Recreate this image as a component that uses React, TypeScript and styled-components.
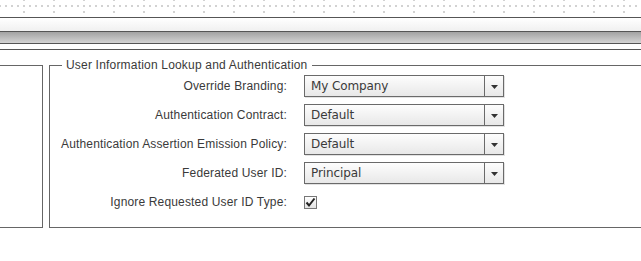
import React from 'react';
import styled, { createGlobalStyle } from 'styled-components';

const GlobalStyle = createGlobalStyle`
  html, body { margin: 0; padding: 0; background: #fff; overflow: hidden; }
  body {
    font-family: "Liberation Sans", Arial, sans-serif;
    font-size: 12px;
    color: #333;
  }
`;

const Page = styled.div`
  width: 641px;
  height: 261px;
  overflow: hidden;
`;

const Ruler = styled.div`
  height: 17px;
  background-image:
    conic-gradient(at 2px 2px, transparent 75%, #d2d2d2 0),
    conic-gradient(at 2px 2px, transparent 75%, #d2d2d2 0);
  background-size: 30px 6px, 6px 6px;
  background-position: 23px 5px, 5px 5px;
  background-repeat: repeat, repeat-x;
`;

const TabStrip = styled.div`
  height: 13px;
  border-top: 1px solid #555;
  background: linear-gradient(#ffffff, #f0f0f0);
`;

const ToolStrip = styled.div`
  height: 11px;
  border-top: 1px solid #555;
  border-bottom: 1px solid #555;
  background: linear-gradient(#a2a2a2, #d4d4d4);
`;

const StripGap = styled.div`
  height: 5px;
  border-bottom: 1px solid #555;
`;

const Content = styled.div`
  display: flex;
  align-items: flex-start;
  gap: 6px;
  margin-left: -2px;
`;

const SidePanel = styled.div`
  flex: none;
  width: 43px;
  height: 161px;
  margin-top: 15px;
  border: 1px solid #666;
`;

const Group = styled.fieldset`
  flex: 1;
  min-width: 0;
  margin: 8px -20px 0 0;
  padding: 0 0 14px;
  border: 1px solid #666;
`;

const Legend = styled.legend`
  margin-left: 12px;
  padding: 0 5px 0 4px;
  font-size: 12px;
  line-height: 15px;
  letter-spacing: 0.19px;
  color: #3a3a3a;
`;

const FormGrid = styled.div`
  display: grid;
  grid-template-columns: 237px 200px;
  column-gap: 17px;
  row-gap: 7px;
  margin-top: 2px;
  align-items: center;
`;

const Label = styled.div`
  text-align: right;
  white-space: nowrap;
  line-height: 22px;
  letter-spacing: 0.16px;
  color: #3a3a3a;
`;

const Select = styled.div`
  box-sizing: border-box;
  height: 22px;
  display: flex;
  border: 1px solid #6a6a6a;
  background: linear-gradient(#fdfdfd, #e8e8e8);
  box-shadow: 1px 1px 0 #e2e2e2;
  font-family: "DejaVu Sans", sans-serif;
  font-size: 12px;
  color: #3a3a3a;
`;

const SelectValue = styled.span`
  flex: 1;
  padding-left: 6px;
  line-height: 20px;
  white-space: nowrap;
  letter-spacing: -0.1px;
`;

const SelectArrow = styled.span`
  box-sizing: border-box;
  width: 19px;
  border-left: 1px solid #6a6a6a;
  display: flex;
  align-items: center;
  justify-content: center;
  padding-top: 1px;
`;

const CheckCell = styled.div`
  height: 22px;
  display: flex;
  align-items: center;
`;

const CheckBox = styled.span`
  box-sizing: border-box;
  width: 13px;
  height: 13px;
  border: 1px solid #777;
  background: linear-gradient(#ffffff, #e2e2e2);
  display: flex;
  align-items: center;
  justify-content: center;
`;

const rows = [
  { label: 'Override Branding:', value: 'My Company' },
  { label: 'Authentication Contract:', value: 'Default' },
  { label: 'Authentication Assertion Emission Policy:', value: 'Default' },
  { label: 'Federated User ID:', value: 'Principal' },
];

const Arrow = () => (
  <svg width="7" height="4" viewBox="0 0 7 4">
    <polygon points="0,0 7,0 3.5,4" fill="#333" />
  </svg>
);

const Tick = () => (
  <svg width="11" height="11" viewBox="0 0 11 11">
    <path d="M1.5 5.5 L4 8.5 L9.5 1.5" fill="none" stroke="#222" strokeWidth="2" />
  </svg>
);

export default function App() {
  return (
    <Page>
      <GlobalStyle />
      <Ruler />
      <TabStrip />
      <ToolStrip />
      <StripGap />
      <Content>
        <SidePanel />
        <Group>
          <Legend>User Information Lookup and Authentication</Legend>
          <FormGrid>
            {rows.map((r) => (
              <React.Fragment key={r.label}>
                <Label>{r.label}</Label>
                <Select>
                  <SelectValue>{r.value}</SelectValue>
                  <SelectArrow>
                    <Arrow />
                  </SelectArrow>
                </Select>
              </React.Fragment>
            ))}
            <Label>Ignore Requested User ID Type:</Label>
            <CheckCell>
              <CheckBox>
                <Tick />
              </CheckBox>
            </CheckCell>
          </FormGrid>
        </Group>
      </Content>
    </Page>
  );
}
